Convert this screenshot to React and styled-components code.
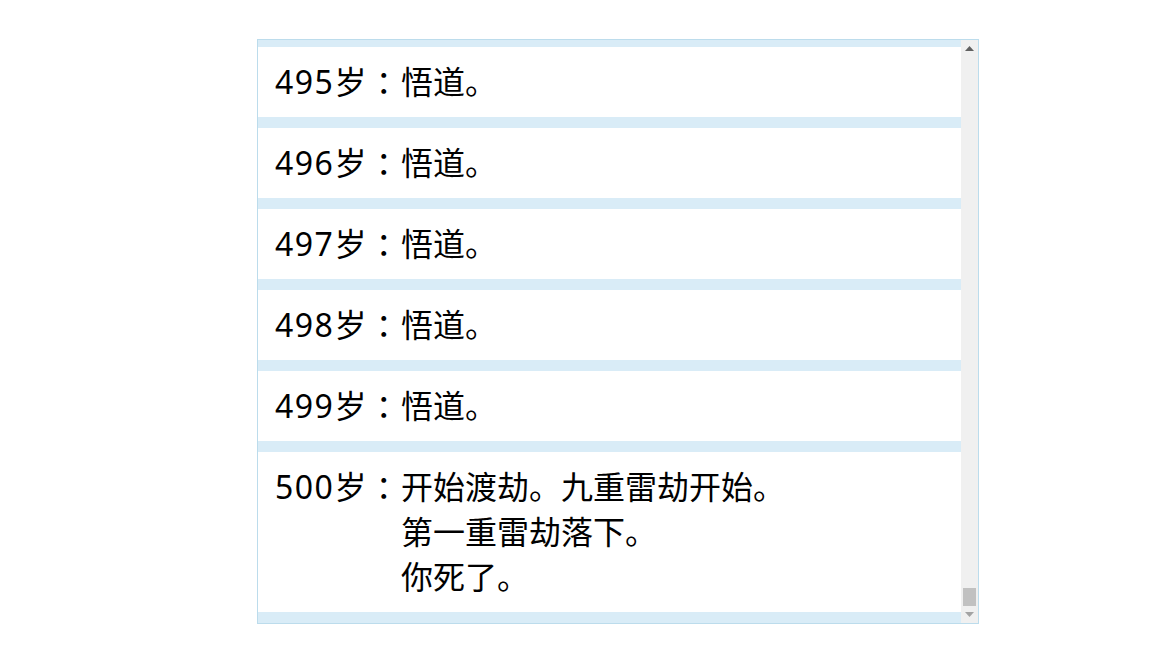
import React from "react";
import styled, { createGlobalStyle } from "styled-components";

const GlobalStyle = createGlobalStyle`
    html, body {
        margin: 0;
        padding: 0;
        background: #fff;
    }
    body {
        font-family: "Noto Sans", "Noto Sans CJK SC", sans-serif;
    }
`;

// 화면에 보이는 마지막 줄들만
const rows = [495, 496, 497, 498, 499].map(age => ({ age, lines: ["悟道。"] }));
rows.push({ age: 500, lines: ["开始渡劫。九重雷劫开始。", "第一重雷劫落下。", "你死了。"] });

const Page = styled.div`
    padding: 39px 0 0 257px;
`;

const LogBox = styled.div`
    width: 722px;
    height: 585px;
    box-sizing: border-box;
    border: 1px solid #bcdcec;
    display: flex;
`;

const List = styled.div`
    flex: 1;
    min-width: 0;
    background: #d9ecf7;
    display: flex;
    flex-direction: column;
    justify-content: flex-end;
    padding-bottom: 11px;
    overflow: hidden;
`;

const Row = styled.div`
    margin-top: 11px;
    background: #fff;
    padding: 12px 16px 13px 17px;
    display: flex;
    align-items: flex-start;
    font-size: 32px;
    line-height: 45px;
    color: #000;
    flex-shrink: 0;
`;

const Age = styled.div`
    flex: 0 0 126px;
    height: 45px;
    display: flex;
    white-space: nowrap;
`;

const Num = styled.span`
    letter-spacing: 1.5px;
`;

const Colon = styled.span`
    flex: 1;
    text-align: center;
    font-family: "Noto Sans CJK JP", sans-serif;
`;

const Lines = styled.div`
    display: flex;
    flex-direction: column;
`;

const ScrollBar = styled.div`
    width: 17px;
    background: #f0f0f0;
    display: flex;
    flex-direction: column;
`;

const ArrowBtn = styled.div`
    height: 17px;
    display: flex;
    align-items: center;
    justify-content: center;
    flex-shrink: 0;
`;

const Track = styled.div`
    flex: 1;
    display: flex;
    flex-direction: column;
    justify-content: flex-end;
`;

const Thumb = styled.div`
    height: 18px;
    margin: 0 2px;
    background: #c1c1c1;
`;

const Arrow = ({ up, color }) => (
    <svg width="9" height="5" viewBox="0 0 9 5">
        <path d={up ? "M0 5 L4.5 0 L9 5 Z" : "M0 0 L4.5 5 L9 0 Z"} fill={color} />
    </svg>
);

const App = () => (
    <>
        <GlobalStyle />
        <Page>
            <LogBox>
                <List>
                    {rows.map(r => (
                        <Row key={r.age}>
                            <Age>
                                <Num>{r.age}</Num>
                                <span>岁</span>
                                <Colon>：</Colon>
                            </Age>
                            <Lines>
                                {r.lines.map((l, i) => <div key={i}>{l}</div>)}
                            </Lines>
                        </Row>
                    ))}
                </List>
                <ScrollBar>
                    <ArrowBtn><Arrow up color="#606060" /></ArrowBtn>
                    <Track><Thumb /></Track>
                    <ArrowBtn><Arrow color="#a3a3a3" /></ArrowBtn>
                </ScrollBar>
            </LogBox>
        </Page>
    </>
);

export default App;
